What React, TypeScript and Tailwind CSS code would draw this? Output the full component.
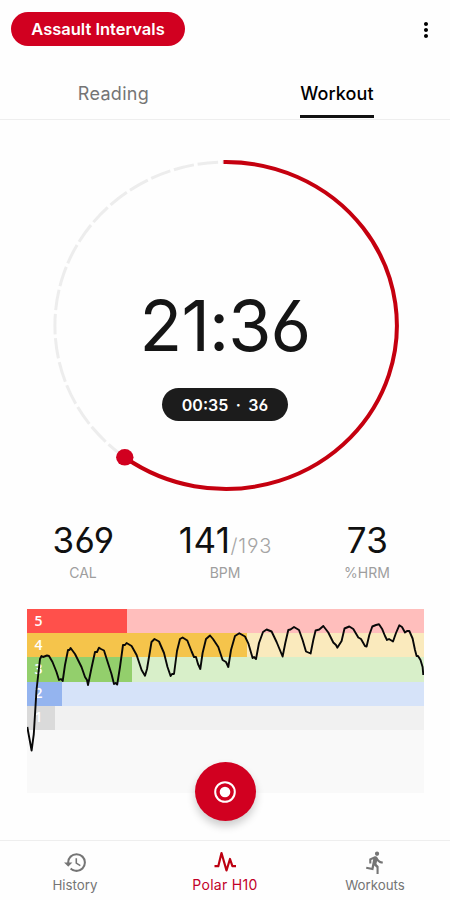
import { MdDirectionsRun, MdHistory, MdMoreVert } from 'react-icons/md';

const zones = [
  { id: 5, band: 'bg-[#ffbebc]', bar: 'bg-[#ff504b]', width: 100.5 },
  { id: 4, band: 'bg-[#faeabd]', bar: 'bg-[#f5c44b]', width: 220 },
  { id: 3, band: 'bg-[#d8efc9]', bar: 'bg-[#93cf6c]', width: 105.5 },
  { id: 2, band: 'bg-[#d6e3f9]', bar: 'bg-[#94b4ef]', width: 35.5 },
  { id: 1, band: 'bg-[#f1f1f1]', bar: 'bg-[#dadada]', width: 28 },
];

// [x, y] inside the 397 x 184 chart
const heartRate = [
  [0.3, 118], [2.5, 130], [4.6, 141.5], [6.8, 125], [9.5, 81], [13, 50], [14.5, 47], [16, 48], [20, 46.5], [22, 47], [25.5, 53], [29.5, 63], [32, 71], [34, 70], [35.7, 72], [38, 56], [41, 41], [42.5, 41], [43.6, 39], [48, 45], [54.5, 58], [58, 68], [60, 71], [61, 76], [64.5, 59], [68, 43], [70, 43], [72, 38.7], [74, 40], [77, 41.5], [80, 51], [84.5, 65], [87, 75], [88.5, 74], [90.2, 75.5], [93, 58], [96, 36], [98, 36], [99.6, 34], [104.6, 37], [109.6, 46], [114.6, 61], [118, 66.7], [120, 60], [124.5, 33], [127.5, 30], [132, 32.5], [137, 44], [140.5, 58], [143.6, 67], [145, 65], [147, 65], [150, 42], [153, 30], [155.6, 28.5], [160.3, 31.5], [164.6, 42.5], [167, 48], [169, 48], [171, 55], [173.3, 60], [175.6, 44], [179, 30], [183, 26.5], [186, 30], [191.3, 38], [195.6, 51], [199, 53], [201.3, 58], [204, 41], [208, 27], [212.3, 24.2], [218, 27.5], [221.3, 34.3], [225.6, 49], [227, 48], [229, 50], [232, 34], [236, 23], [239.6, 20.5], [244.6, 22.5], [249.6, 33], [255.6, 47.5], [258.3, 34], [261.3, 21], [263.5, 20.5], [267, 18], [272, 21], [275.6, 31], [279, 42.5], [283.6, 44.5], [286.3, 31], [288.6, 21.5], [292.3, 20.5], [296.3, 17], [301.3, 23.5], [306.3, 33.5], [309, 36], [310.3, 38.7], [314.6, 32], [317.5, 19.5], [322.3, 17.5], [326.3, 20], [331.3, 28.5], [334, 30], [338, 37], [339.6, 37.5], [342.3, 26], [345.3, 17.5], [349, 16], [352, 15.3], [355.3, 20.3], [358, 27], [360, 31], [362, 30], [366, 32.5], [369, 24], [372.3, 16.3], [375, 18], [378, 23.5], [380, 22], [382.3, 22], [385.6, 29.5], [388, 41], [389.6, 47], [391, 47], [393.5, 51], [395.6, 58], [396.3, 66],
];

const linePoints = heartRate.map((p) => p.join(',')).join(' ');

function Header() {
  return (
    <header className="flex h-[58px] items-center justify-between pl-[11px] pr-[12px]">
      <button className="flex h-[34px] w-[174px] items-center justify-center whitespace-nowrap rounded-full bg-[#d10020] text-[16.5px] font-semibold text-white">
        Assault Intervals
      </button>
      <MdMoreVert size={24} className="mt-0.5 text-black" />
    </header>
  );
}

function Tabs() {
  return (
    <nav className="flex h-[62px] border-b border-[#eeeeee] text-[18px] tracking-[0.3px]">
      <div className="flex flex-1 justify-center">
        <span className="pl-0.5 pt-[22px] text-[#757575]">Reading</span>
      </div>
      <div className="flex flex-1 justify-center">
        <span className="mr-px h-[60px] w-[74px] whitespace-nowrap border-b-[3px] border-[#111111] pt-[22px] text-center font-medium tracking-[0.1px] text-black">
          Workout
        </span>
      </div>
    </nav>
  );
}

function Timer() {
  return (
    <section className="relative h-[388px]">
      <svg className="absolute inset-0" width="450" height="388" viewBox="0 120 450 388" fill="none">
        <path
          d="M226 162 A171 163.5 0 0 0 125 457.5"
          stroke="#ededed"
          strokeWidth="3"
          strokeDasharray="20.5 3.8"
          strokeDashoffset="-8"
        />
        <path d="M223.5 162 A171 163.5 0 1 1 125 457.5" stroke="#c5000f" strokeWidth="4" />
        <ellipse cx="124.8" cy="457.3" rx="8.7" ry="8.3" fill="#d10020" />
      </svg>
      <div className="relative flex flex-col items-center pt-[166px]">
        <div className="h-20 whitespace-nowrap text-[70px] font-[370] leading-[80px] tracking-[-0.9px] text-[#151515]">21:36</div>
        <div className="mt-[22px] flex h-[33px] w-[126px] items-center justify-center gap-[7.5px] rounded-full bg-[#1c1c1c] text-[16px] font-semibold text-white">
          <span>00:35</span>
          <span>·</span>
          <span>36</span>
        </div>
      </div>
    </section>
  );
}

function Stat({ value, total, label }: { value: string; total?: string; label: string }) {
  return (
    <div className="flex w-[142px] flex-col items-center">
      <div className="flex h-[42px] items-baseline whitespace-nowrap pl-px text-[35px] leading-[42px] tracking-[0.4px] text-[#101010]">
        {value}
        {total && <span className="text-[20px] font-light leading-6 tracking-[0.8px] text-[#a5a5a5]">/{total}</span>}
      </div>
      <span className="mt-[2px] text-[14px] leading-5 text-[#9e9e9e]">{label}</span>
    </div>
  );
}

function ZoneChart() {
  return (
    <section className="relative mx-auto mt-[26px] h-[184px] w-[397px] bg-[#f9f9f9]">
      {zones.map((zone) => (
        <div key={zone.id} className={`h-[24.2px] ${zone.band}`}>
          <div className={`flex h-full items-center pb-0.5 pl-2 ${zone.bar}`} style={{ width: zone.width }}>
            <span className="font-['Open_Sans'] text-[14px] font-semibold text-white">{zone.id}</span>
          </div>
        </div>
      ))}
      <svg className="absolute inset-0" width="397" height="184" viewBox="0 0 397 184">
        <polyline points={linePoints} fill="none" stroke="#080808" strokeWidth="1.9" strokeLinejoin="round" />
      </svg>
      <button className="absolute left-[168px] top-[153px] flex h-[59px] w-[61px] items-center justify-center rounded-[50%] bg-[#d10020] shadow-[0_5px_8px_rgba(0,0,0,0.2)]">
        <svg width="24" height="24" viewBox="0 0 24 24" fill="none">
          <circle cx="12" cy="12" r="9.8" stroke="white" strokeWidth="2" />
          <circle cx="12" cy="12" r="5.3" fill="white" />
        </svg>
      </button>
    </section>
  );
}

function BottomNav() {
  return (
    <footer className="mt-[47px] flex h-[60px] border-t border-[#eeeeee] text-[13.3px] text-[#757575]">
      <div className="flex flex-1 flex-col items-center pt-[9px]">
        <MdHistory size={25} />
        <span className="leading-5">History</span>
      </div>
      <div className="flex flex-1 flex-col items-center pt-[9px] text-[#c20028]">
        <svg width="24" height="25" viewBox="0 0 24 25" fill="none" stroke="#bd0011" strokeWidth="2.2" strokeLinejoin="round">
          <path d="M1.5 16.2h3.8L8.5 3l5 17.5L17 9l2.4 7.2H23" />
        </svg>
        <span className="whitespace-nowrap text-[14px] leading-5 tracking-[0.3px]">Polar H10</span>
      </div>
      <div className="flex flex-1 flex-col items-center pt-[9px]">
        <MdDirectionsRun size={25} />
        <span className="leading-5">Workouts</span>
      </div>
    </footer>
  );
}

export default function App() {
  return (
    <div className="h-[900px] w-[450px] overflow-hidden bg-[#fefefe] font-['Inter',sans-serif] [font-feature-settings:'cv03','cv04']">
      <Header />
      <Tabs />
      <Timer />
      <section className="flex justify-center pt-[11px]">
        <Stat value="369" label="CAL" />
        <Stat value="141" total="193" label="BPM" />
        <Stat value="73" label="%HRM" />
      </section>
      <ZoneChart />
      <BottomNav />
    </div>
  );
}
